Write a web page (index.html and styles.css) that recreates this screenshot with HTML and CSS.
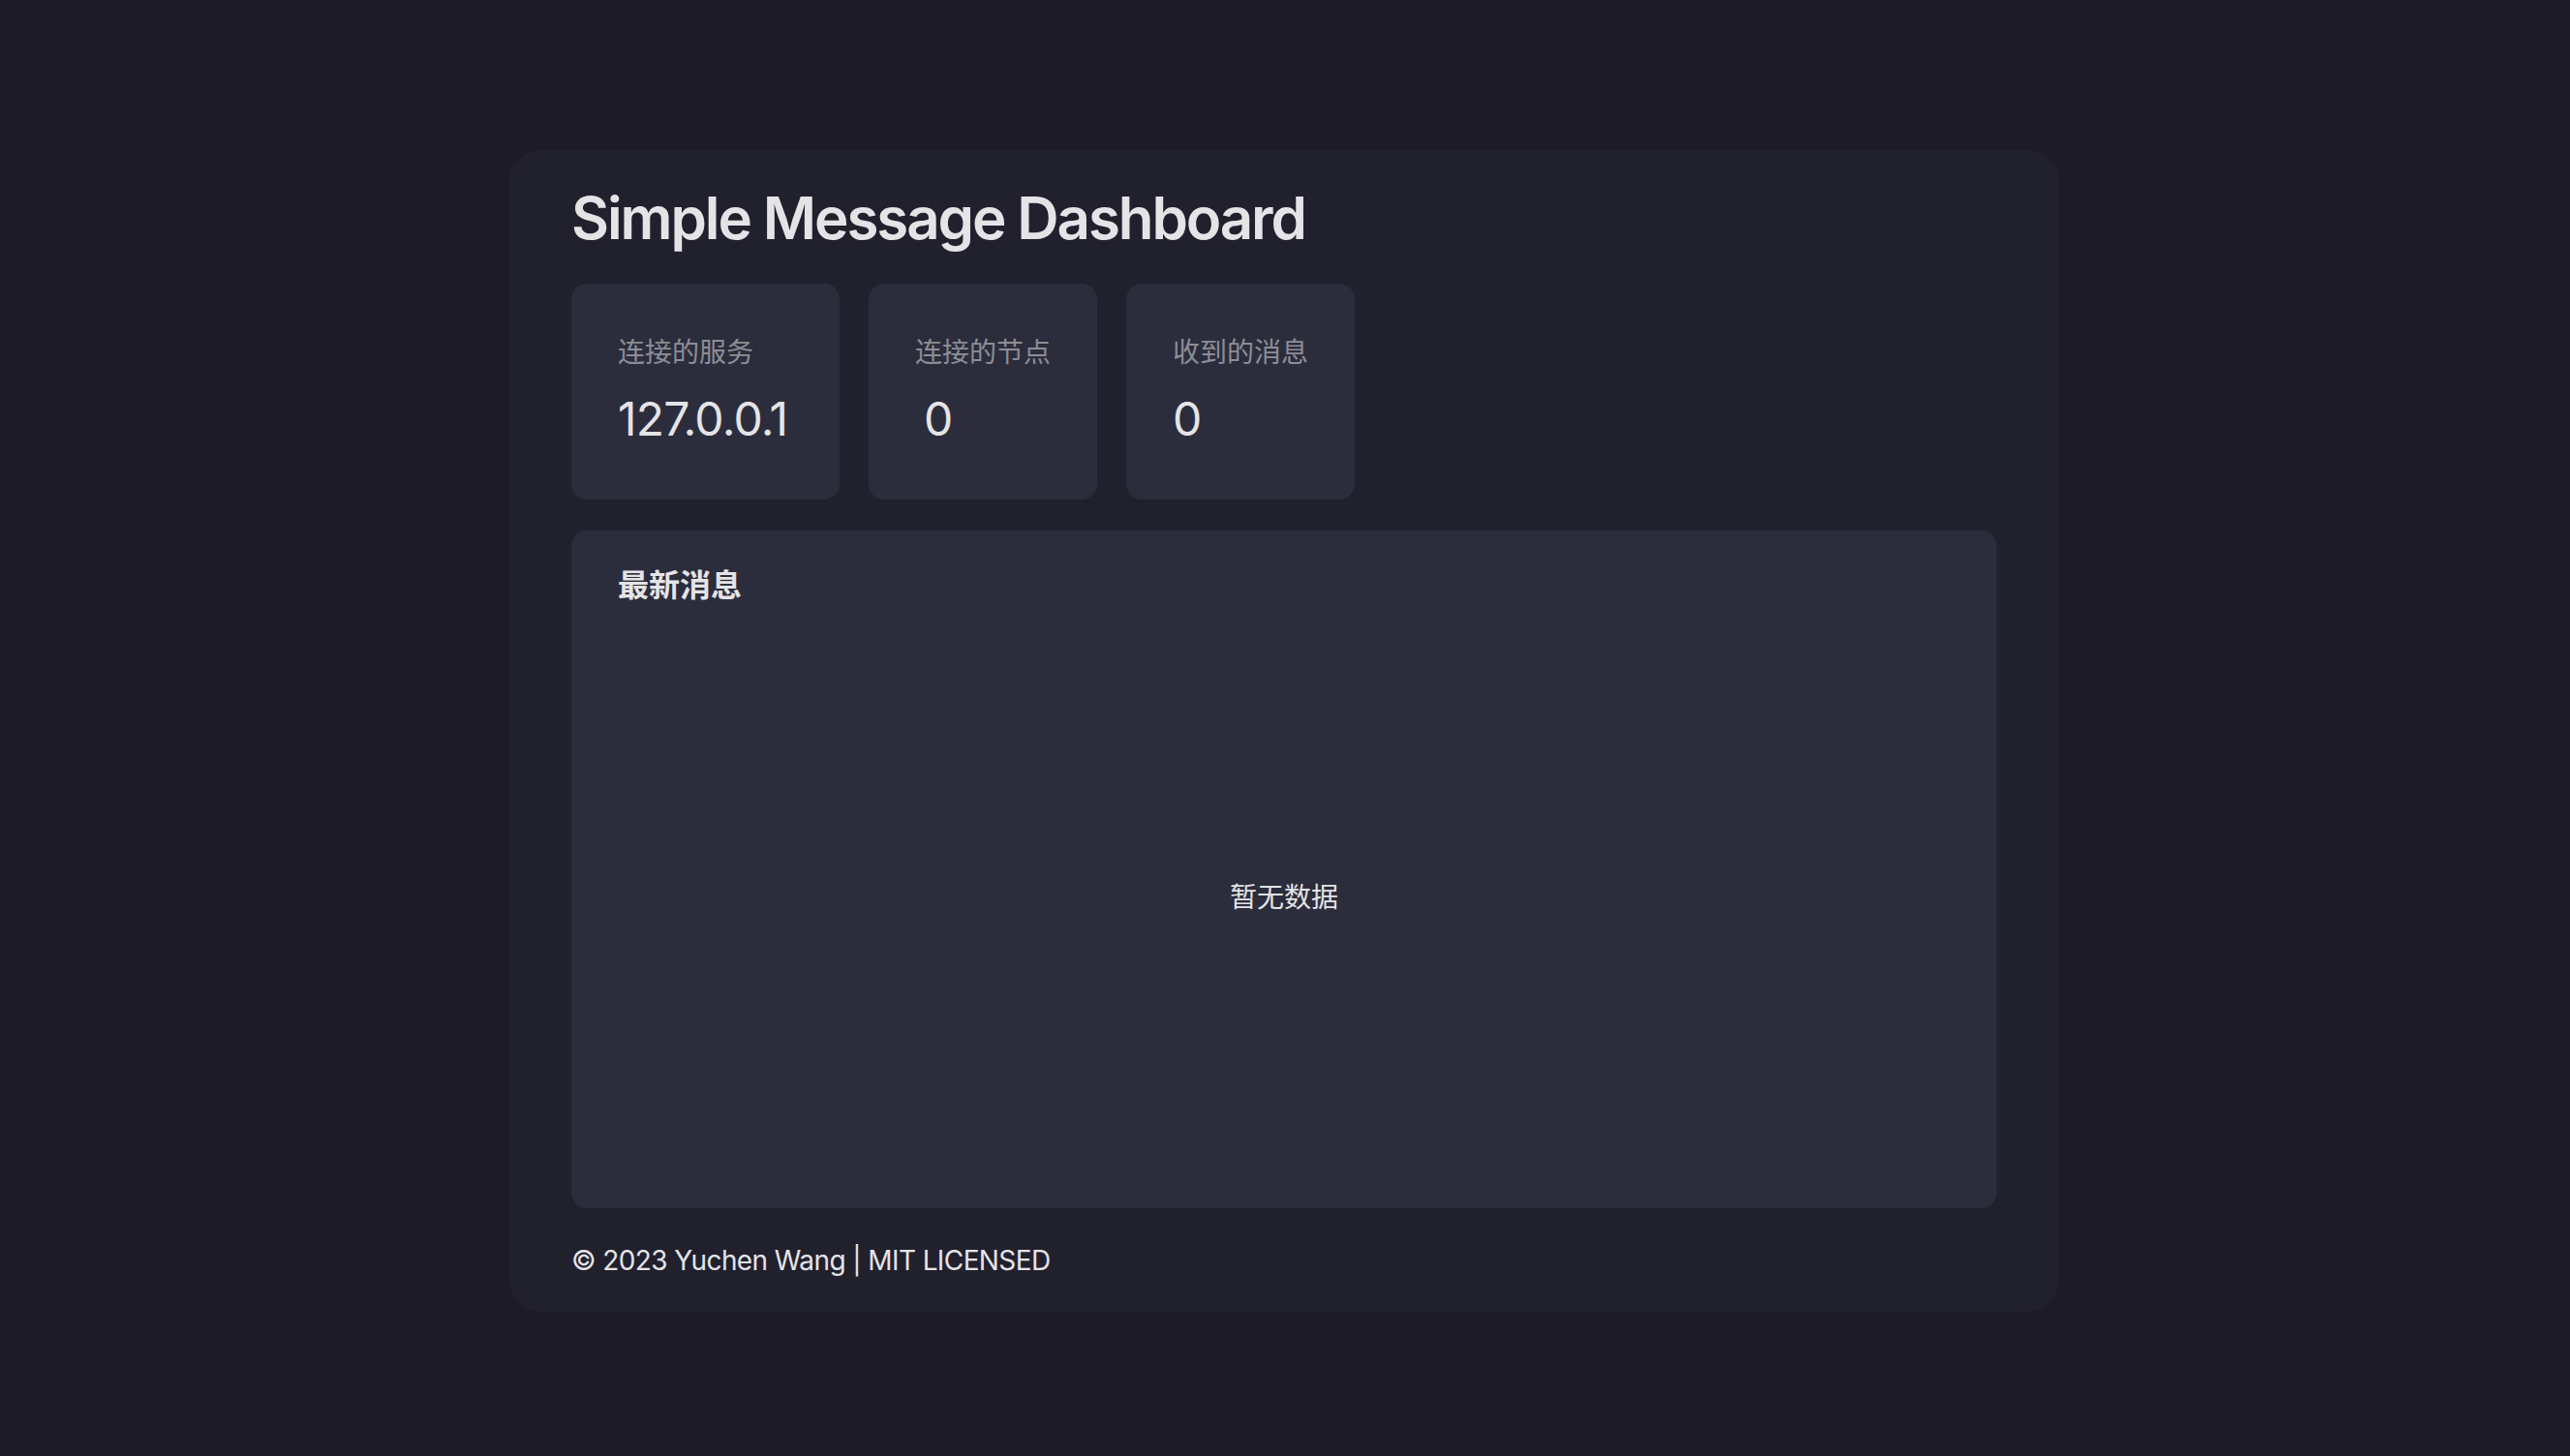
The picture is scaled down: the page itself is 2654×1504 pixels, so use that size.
FILE: index.html
```html
<!DOCTYPE html>
<html lang="zh-CN">
<head>
<meta charset="utf-8">
<title>Simple Message Dashboard</title>
<link rel="stylesheet" href="styles.css">
</head>
<body>
<div class="page">
  <main class="card">
    <h1 class="title">Simple Message Dashboard</h1>
    <section class="stats">
      <div class="stat stat--service">
        <div class="stat-label">连接的服务</div>
        <div class="stat-value">127.0.0.1</div>
      </div>
      <div class="stat">
        <div class="stat-label">连接的节点</div>
        <div class="stat-value stat-value--indent">0</div>
      </div>
      <div class="stat">
        <div class="stat-label">收到的消息</div>
        <div class="stat-value">0</div>
      </div>
    </section>
    <section class="panel">
      <h2 class="panel-title">最新消息</h2>
      <div class="panel-empty">暂无数据</div>
    </section>
    <footer class="footer">© 2023 Yuchen Wang | MIT LICENSED</footer>
  </main>
</div>
</body>
</html>
```

FILE: styles.css
```css
* { box-sizing: border-box; }
html, body {
  margin: 0;
  padding: 0;
  background: #1d1c26;
}
body {
  font-family: Inter, "Noto Sans CJK SC", sans-serif;
  color: #e4e4e7;
}
.page {
  display: flex;
  justify-content: center;
  align-items: flex-start;
  padding-top: 155px;
  padding-right: 2px;
  min-height: 1504px;
}
.card {
  width: 1600px;
  background: #21202d;
  border-radius: 32px;
  padding: 34px 64px 33px;
  display: flex;
  flex-direction: column;
}
.title {
  margin: 0;
  font-size: 60px;
  line-height: 72px;
  font-weight: 600;
  color: #e4e4e7;
  letter-spacing: -2.1px;
}
.stats {
  display: flex;
  gap: 30px;
  margin-top: 32px;
}
.stat {
  background: #2c2d3c;
  border-radius: 16px;
  padding: 50px 48px 47px;
  width: 236px;
}
.stat--service { width: 277px; }
.stat-label {
  font-size: 28px;
  line-height: 42px;
  color: #8d8d97;
  white-space: nowrap;
}
.stat-value {
  margin-top: 12px;
  font-size: 48px;
  line-height: 72px;
  font-weight: 400;
  color: #e4e4e7;
  white-space: nowrap;
  letter-spacing: -0.8px;
}
.stat-value--indent { padding-left: 9px; }
.panel {
  margin-top: 32px;
  height: 700px;
  background: #2c2d3c;
  border-radius: 16px;
  padding: 33px 48px 27px;
  display: flex;
  flex-direction: column;
}
.panel-title {
  margin: 0;
  font-size: 32px;
  line-height: 48px;
  font-weight: 700;
  color: #e4e4e7;
}
.panel-empty {
  flex: 1;
  display: flex;
  align-items: center;
  justify-content: center;
  padding-top: 4px;
  font-size: 28px;
  line-height: 40px;
  color: #e4e4e7;
}
.footer {
  margin-top: 34px;
  font-size: 28px;
  line-height: 40px;
  color: #e4e4e7;
  letter-spacing: -0.6px;
}
```
